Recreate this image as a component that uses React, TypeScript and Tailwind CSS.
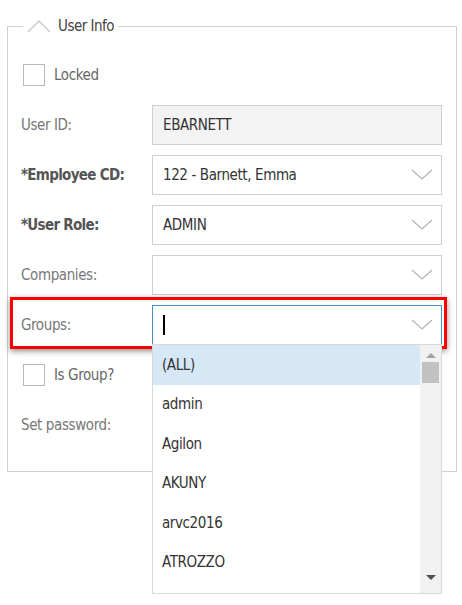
import React from "react";

const font = {
  fontFamily: '"DejaVu Sans Condensed", "Liberation Sans Narrow", "Roboto", sans-serif',
};

const ChevronDown = () => (
  <svg width="22" height="12" viewBox="0 0 22 12" className="shrink-0">
    <polyline points="1,1 11,10 21,1" fill="none" stroke="#b5b5b5" strokeWidth="1.3" />
  </svg>
);

const Checkbox = ({ label }: { label: string }) => (
  <div className="flex items-center h-[40px] pl-[2px]">
    <span className="w-[22px] h-[22px] border border-[#b8b8b8] bg-white" />
    <span className="ml-[9px] text-[15px] tracking-[-0.4px] text-[#666]">{label}</span>
  </div>
);

interface RowProps {
  label: string;
  bold?: boolean;
  children?: React.ReactNode;
}

const Row = ({ label, bold, children }: RowProps) => (
  <div className="flex items-center h-[40px]">
    <label
      className={`w-[131px] text-[15px] ${
        bold ? "font-bold text-[#555] tracking-[-0.7px]" : "text-[#777] tracking-[-0.4px]"
      }`}
    >
      {label}
    </label>
    {children}
  </div>
);

const Select = ({ value, focused }: { value?: string; focused?: boolean }) => (
  <div
    className={`flex items-center justify-between w-[290px] h-[40px] pl-[10px] pr-[8px] bg-white border ${
      focused ? "border-[#4a90c8]" : "border-[#cfcfcf]"
    }`}
  >
    <span className="text-[15px] tracking-[-0.4px] text-[#333] flex items-center">
      {focused ? <span className="inline-block w-[2px] h-[20px] bg-black" /> : value}
    </span>
    <ChevronDown />
  </div>
);

const groups = ["(ALL)", "admin", "Agilon", "AKUNY", "arvc2016", "ATROZZO"];

export default function App() {
  return (
    <div className="relative w-[462px] h-[605px] bg-white overflow-hidden" style={font}>
      <div className="pt-[14px] px-[7px]">
        <fieldset className="border border-[#d2d2d2] w-[450px] pl-[13px] pr-[14px] pb-[26px]">
          <legend className="ml-[2px] px-[4px] flex items-center gap-[7px] h-[24px]">
            <svg width="24" height="14" viewBox="0 0 24 14">
              <polyline points="1,13 12,2 23,13" fill="none" stroke="#c8c8c8" strokeWidth="1.3" />
            </svg>
            <span className="text-[15px] tracking-[-0.5px] text-[#444]">User Info</span>
          </legend>

          <div className="flex flex-col gap-[10px] pt-[17px]">
            <Checkbox label="Locked" />
            <Row label="User ID:">
              <div className="flex items-center w-[290px] h-[40px] pl-[10px] bg-[#f3f3f3] border border-[#cfcfcf] text-[15px] tracking-[-0.4px] text-[#333]">
                EBARNETT
              </div>
            </Row>
            <Row label="*Employee CD:" bold>
              <Select value="122 - Barnett, Emma" />
            </Row>
            <Row label="*User Role:" bold>
              <Select value="ADMIN" />
            </Row>
            <Row label="Companies:">
              <Select />
            </Row>
            <Row label="Groups:">
              <Select focused />
            </Row>
            <Checkbox label="Is Group?" />
            <Row label="Set password:" />
          </div>
        </fieldset>
      </div>

      {/* highlight box */}
      <div className="absolute left-[10px] top-[297px] w-[437px] h-[52px] border-[3px] border-[#ff0000] shadow-[0_2px_6px_rgba(0,0,0,0.45)] pointer-events-none" />

      {/* dropdown list */}
      <div className="absolute left-[152px] top-[344px] w-[290px] h-[250px] bg-white border border-[#d8d8d8] flex">
        <ul className="flex-1">
          {groups.map((g, i) => (
            <li
              key={g}
              className={`h-[39.5px] flex items-center pl-[9px] text-[15px] tracking-[-0.4px] text-[#333] ${
                i === 0 ? "bg-[#d6e8f5]" : ""
              }`}
            >
              {g}
            </li>
          ))}
        </ul>
        <div className="w-[21px] bg-[#f1f1f1] flex flex-col items-center">
          <svg width="10" height="6" viewBox="0 0 10 6" className="mt-[7px]">
            <polygon points="0,6 5,1 10,6" fill="#a3a3a3" />
          </svg>
          <div className="mt-[4px] w-[17px] h-[21px] bg-[#c1c1c1]" />
          <div className="flex-1" />
          <svg width="10" height="6" viewBox="0 0 10 6" className="mb-[12px]">
            <polygon points="0,0 10,0 5,5" fill="#505050" />
          </svg>
        </div>
      </div>
    </div>
  );
}
